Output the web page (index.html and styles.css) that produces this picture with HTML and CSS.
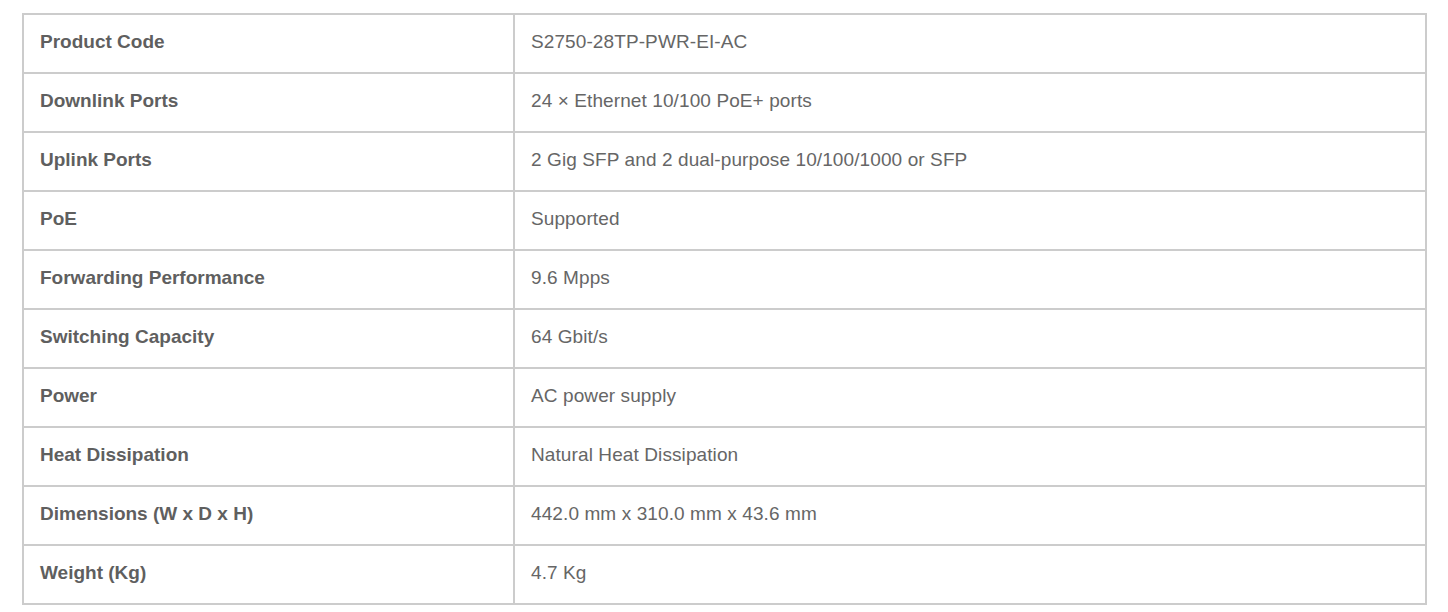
FILE: index.html
```html
<!DOCTYPE html>
<html>
<head>
<meta charset="utf-8">
<link rel="stylesheet" href="styles.css">
</head>
<body>
<table class="specs">
  <tbody>
    <tr><td class="label">Product Code</td><td class="value">S2750-28TP-PWR-EI-AC</td></tr>
    <tr><td class="label">Downlink Ports</td><td class="value">24 × Ethernet 10/100 PoE+ ports</td></tr>
    <tr><td class="label">Uplink Ports</td><td class="value">2 Gig SFP and 2 dual-purpose 10/100/1000 or SFP</td></tr>
    <tr><td class="label">PoE</td><td class="value">Supported</td></tr>
    <tr><td class="label">Forwarding Performance</td><td class="value">9.6 Mpps</td></tr>
    <tr><td class="label">Switching Capacity</td><td class="value">64 Gbit/s</td></tr>
    <tr><td class="label">Power</td><td class="value">AC power supply</td></tr>
    <tr><td class="label">Heat Dissipation</td><td class="value">Natural Heat Dissipation</td></tr>
    <tr><td class="label">Dimensions (W x D x H)</td><td class="value">442.0 mm x 310.0 mm x 43.6 mm</td></tr>
    <tr><td class="label">Weight (Kg)</td><td class="value">4.7 Kg</td></tr>
  </tbody>
</table>
</body>
</html>
```
FILE: styles.css
```css
html, body {
  margin: 0;
  padding: 0;
  background: #fff;
}

body {
  padding: 13px 0 0 22px;
  font-family: "Liberation Sans", Arial, sans-serif;
  font-size: 19px;
  color: #666;
}

.specs {
  width: 1405px;
  border-collapse: separate;
  border-spacing: 0;
  border: 1px solid #ccc;
  box-sizing: border-box;
  table-layout: fixed;
}

.specs td {
  border: 1px solid #ccc;
  padding: 12px 16px 16px;
  line-height: 29px;
  height: 29px;
  vertical-align: top;
  text-align: left;
  white-space: nowrap;
}

.specs .label {
  width: 457px;
  font-weight: bold;
  color: #5f5f5f;
}

.specs .value {
  font-weight: normal;
  color: #666;
  letter-spacing: 0.1px;
}
```
